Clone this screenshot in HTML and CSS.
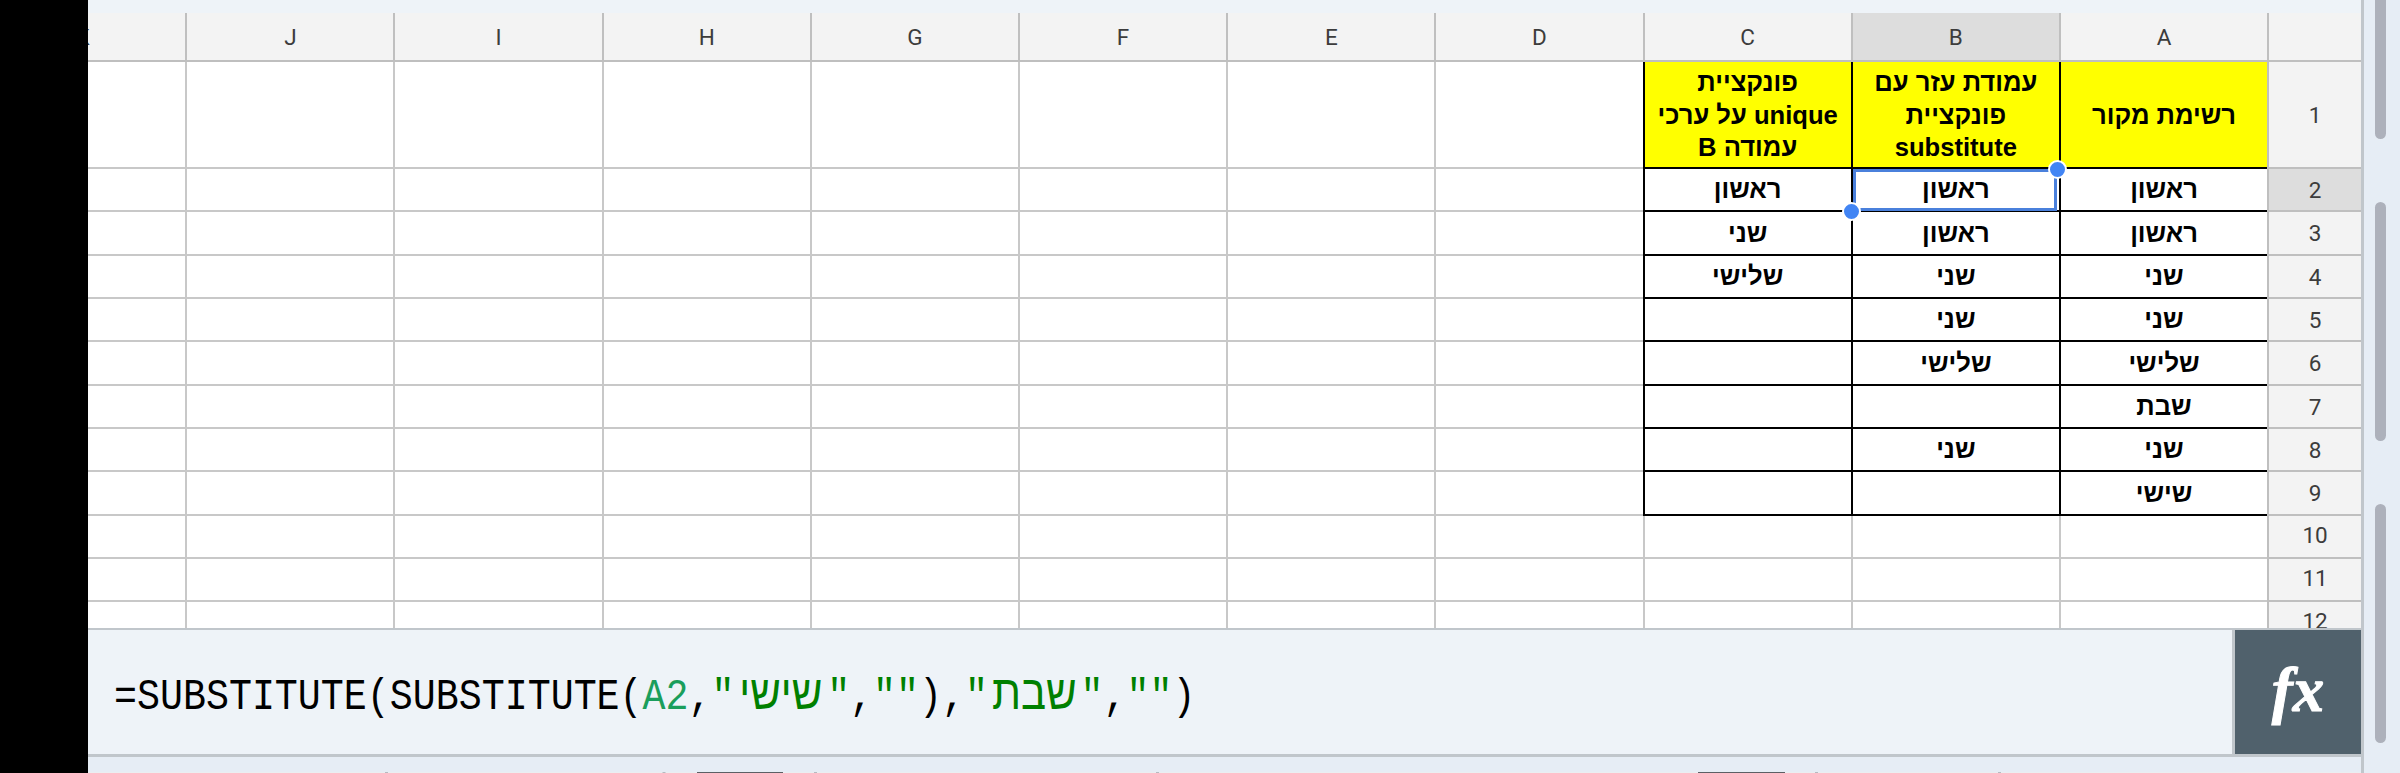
FILE: index.html
```html
<!DOCTYPE html>
<html lang="he">
<head>
    <meta charset="UTF-8">
    <title>SUBSTITUTE</title>
    <link rel="stylesheet" href="styles.css">
</head>
<body>
    <div class="side-rail"></div>
    <main class="app">
        <!-- Sheet -->
        <div class="sheet" dir="rtl">
            <div class="row row-letters">
                <div class="num"></div>
                <div class="cell">A</div><div class="cell selected">B</div><div class="cell">C</div><div class="cell">D</div><div class="cell">E</div><div class="cell">F</div><div class="cell">G</div><div class="cell">H</div><div class="cell">I</div><div class="cell">J</div><div class="cell cut">K</div>
            </div>
            <div class="row row-title">
                <div class="num">1</div>
                <div class="cell data">רשימת מקור</div>
                <div class="cell data">עמודת עזר עם<br>פונקציית<br>substitute</div>
                <div class="cell data">פונקציית<br>unique על ערכי<br>עמודה B</div>
                <div class="cell"></div><div class="cell"></div><div class="cell"></div><div class="cell"></div><div class="cell"></div><div class="cell"></div><div class="cell"></div><div class="cell"></div>
            </div>
            <div class="row">
                <div class="num selected">2</div>
                <div class="cell data">ראשון</div>
                <div class="cell data active">ראשון<span class="selection"><i class="handle handle-top"></i><i class="handle handle-bottom"></i></span></div>
                <div class="cell data">ראשון</div>
                <div class="cell"></div><div class="cell"></div><div class="cell"></div><div class="cell"></div><div class="cell"></div><div class="cell"></div><div class="cell"></div><div class="cell"></div>
            </div>
            <div class="row tall">
                <div class="num">3</div>
                <div class="cell data">ראשון</div><div class="cell data">ראשון</div><div class="cell data">שני</div>
                <div class="cell"></div><div class="cell"></div><div class="cell"></div><div class="cell"></div><div class="cell"></div><div class="cell"></div><div class="cell"></div><div class="cell"></div>
            </div>
            <div class="row">
                <div class="num">4</div>
                <div class="cell data">שני</div><div class="cell data">שני</div><div class="cell data">שלישי</div>
                <div class="cell"></div><div class="cell"></div><div class="cell"></div><div class="cell"></div><div class="cell"></div><div class="cell"></div><div class="cell"></div><div class="cell"></div>
            </div>
            <div class="row">
                <div class="num">5</div>
                <div class="cell data">שני</div><div class="cell data">שני</div><div class="cell data"></div>
                <div class="cell"></div><div class="cell"></div><div class="cell"></div><div class="cell"></div><div class="cell"></div><div class="cell"></div><div class="cell"></div><div class="cell"></div>
            </div>
            <div class="row tall">
                <div class="num">6</div>
                <div class="cell data">שלישי</div><div class="cell data">שלישי</div><div class="cell data"></div>
                <div class="cell"></div><div class="cell"></div><div class="cell"></div><div class="cell"></div><div class="cell"></div><div class="cell"></div><div class="cell"></div><div class="cell"></div>
            </div>
            <div class="row">
                <div class="num">7</div>
                <div class="cell data">שבת</div><div class="cell data"></div><div class="cell data"></div>
                <div class="cell"></div><div class="cell"></div><div class="cell"></div><div class="cell"></div><div class="cell"></div><div class="cell"></div><div class="cell"></div><div class="cell"></div>
            </div>
            <div class="row">
                <div class="num">8</div>
                <div class="cell data">שני</div><div class="cell data">שני</div><div class="cell data"></div>
                <div class="cell"></div><div class="cell"></div><div class="cell"></div><div class="cell"></div><div class="cell"></div><div class="cell"></div><div class="cell"></div><div class="cell"></div>
            </div>
            <div class="row tall">
                <div class="num">9</div>
                <div class="cell data">שישי</div><div class="cell data"></div><div class="cell data"></div>
                <div class="cell"></div><div class="cell"></div><div class="cell"></div><div class="cell"></div><div class="cell"></div><div class="cell"></div><div class="cell"></div><div class="cell"></div>
            </div>
            <div class="row two-digit">
                <div class="num">10</div>
                <div class="cell"></div><div class="cell"></div><div class="cell"></div><div class="cell"></div><div class="cell"></div><div class="cell"></div><div class="cell"></div><div class="cell"></div><div class="cell"></div><div class="cell"></div><div class="cell"></div>
            </div>
            <div class="row two-digit">
                <div class="num">11</div>
                <div class="cell"></div><div class="cell"></div><div class="cell"></div><div class="cell"></div><div class="cell"></div><div class="cell"></div><div class="cell"></div><div class="cell"></div><div class="cell"></div><div class="cell"></div><div class="cell"></div>
            </div>
            <div class="row two-digit">
                <div class="num">12</div>
                <div class="cell"></div><div class="cell"></div><div class="cell"></div><div class="cell"></div><div class="cell"></div><div class="cell"></div><div class="cell"></div><div class="cell"></div><div class="cell"></div><div class="cell"></div><div class="cell"></div>
            </div>
        </div>

        <!-- Formula bar -->
        <div class="formula-bar">
            <div class="formula"><span>=SUBSTITUTE(SUBSTITUTE(</span><span class="ref">A2</span><span>,</span><span class="str">"</span><span class="str heb">שישי</span><span class="str">"</span><span>,</span><span class="str">""</span><span>),</span><span class="str">"</span><span class="str heb">שבת</span><span class="str">"</span><span>,</span><span class="str">""</span><span>)</span></div>
            <div class="fx">fx</div>
        </div>

        <!-- Top edge of the keyboard -->
        <svg class="keyboard" width="2273" height="16" viewBox="88 757 2273 16">
            <path d="M88 772.5H2361" stroke="#ebeef1"/>
            <path d="M697 772.5H783M1698 772.5H1785" stroke="#5c5f64"/>
            <path d="M385 772.5h3M662.500 772.5h3M814 772.5h3M1156 772.5h3M1815 772.5h3M1998 772.5h3" stroke="#b5bac0"/>
        </svg>
    </main>
    <aside class="scroll">
        <div class="bar bar-first"></div>
        <div class="bar"></div>
        <div class="bar"></div>
    </aside>
</body>
</html>
```
FILE: styles.css
```css
:root {
    --linea: #c8c8c8;
    --borde: #c0c6cb;
    --panel: #eef3f8;
    --fondo: #e6edf5;
    --azul: #4285f4;
}

* {
    margin: 0;
    padding: 0;
    box-sizing: border-box;
}

body {
    display: flex;
    height: 773px;
    overflow: hidden;
    background: var(--fondo);
    font-family: Roboto, sans-serif;
}

.side-rail {
    width: 88px;
    background: #000;
}

.app {
    width: 2276px;
    padding-top: 13px;
    background: var(--panel);
    border-right: 3px solid var(--borde);
    overflow: hidden;
}

/* Sheet */
.sheet {
    height: 617px;
    overflow: hidden;
    border-bottom: 2px solid var(--borde);
    background: #fff;
}

.row {
    display: flex;
    height: 43px;
}

.row.tall {
    height: 44px;
}

.num,
.cell {
    flex: none;
    display: flex;
    align-items: center;
    justify-content: center;
    text-align: center;
    border-left: 2px solid var(--linea);
    border-bottom: 2px solid var(--linea);
}

.num {
    width: 93.9px;
    background: #f3f3f3;
    border-color: #bfbfbf;
    color: #3c3c3c;
    font-size: 22.5px;
}

.two-digit .num {
    padding-bottom: 3px;
}

.cell {
    width: 208.2px;
}

.row-letters {
    height: 49px;
}

.row-letters .cell {
    background: #f3f3f3;
    border-color: #bfbfbf;
    color: #3c3c3c;
    font-size: 22.5px;
}

.row-letters .cut {
    padding-left: 1px;
}

.row-letters .selected,
.num.selected {
    background: #ddd;
}

.data {
    border-color: #000;
    color: #000;
    font: bold 25.6px/32.6px "Liberation Sans", sans-serif;
}

.row-title {
    height: 107px;
}

.row-title .data {
    padding-top: 1px;
    background: #ff0;
}

/* Selected cell */
.active {
    position: relative;
}

.selection {
    position: absolute;
    inset: 0 2px -1px 0;
    border: 3px solid #4a80dc;
}

.handle {
    position: absolute;
    width: 19px;
    height: 19px;
    border: 2px solid #fff;
    border-radius: 50%;
    background: var(--azul);
}

.handle-top {
    top: -12px;
    right: -13px;
}

.handle-bottom {
    bottom: -13px;
    left: -14px;
}

/* Formula bar */
.formula-bar {
    display: flex;
    height: 127px;
    border-bottom: 3px solid var(--borde);
}

.formula {
    flex: 1;
    display: flex;
    align-items: baseline;
    padding: 41px 0 0 26px;
    font: 38.3px/43px "Liberation Mono", monospace;
    white-space: pre;
    color: #000;
    transform: scaleY(1.14);
}

.ref {
    color: #1a9e5c;
}

.str {
    color: #008000;
}

.heb {
    display: flex;
    justify-content: center;
    width: 92.6px;
    font-family: "Liberation Sans", sans-serif;
    font-size: 42px;
}

.fx {
    width: 129px;
    border-left: 3px solid var(--borde);
    background: #50616c;
    color: #fff;
    font: italic bold 63px/120px "Liberation Serif", serif;
    text-align: center;
    -webkit-text-stroke: 1px #fff;
}

.keyboard {
    display: block;
    background: var(--fondo);
}

/* Scrollbars at the right edge */
.scroll {
    display: flex;
    flex-direction: column;
    gap: 63px;
    padding-left: 11px;
}

.bar {
    flex: none;
    width: 11px;
    height: 239px;
    border-radius: 6px;
    background: #adb1bb;
}

.bar-first {
    height: 139px;
    border-radius: 0 0 6px 6px;
}
```
